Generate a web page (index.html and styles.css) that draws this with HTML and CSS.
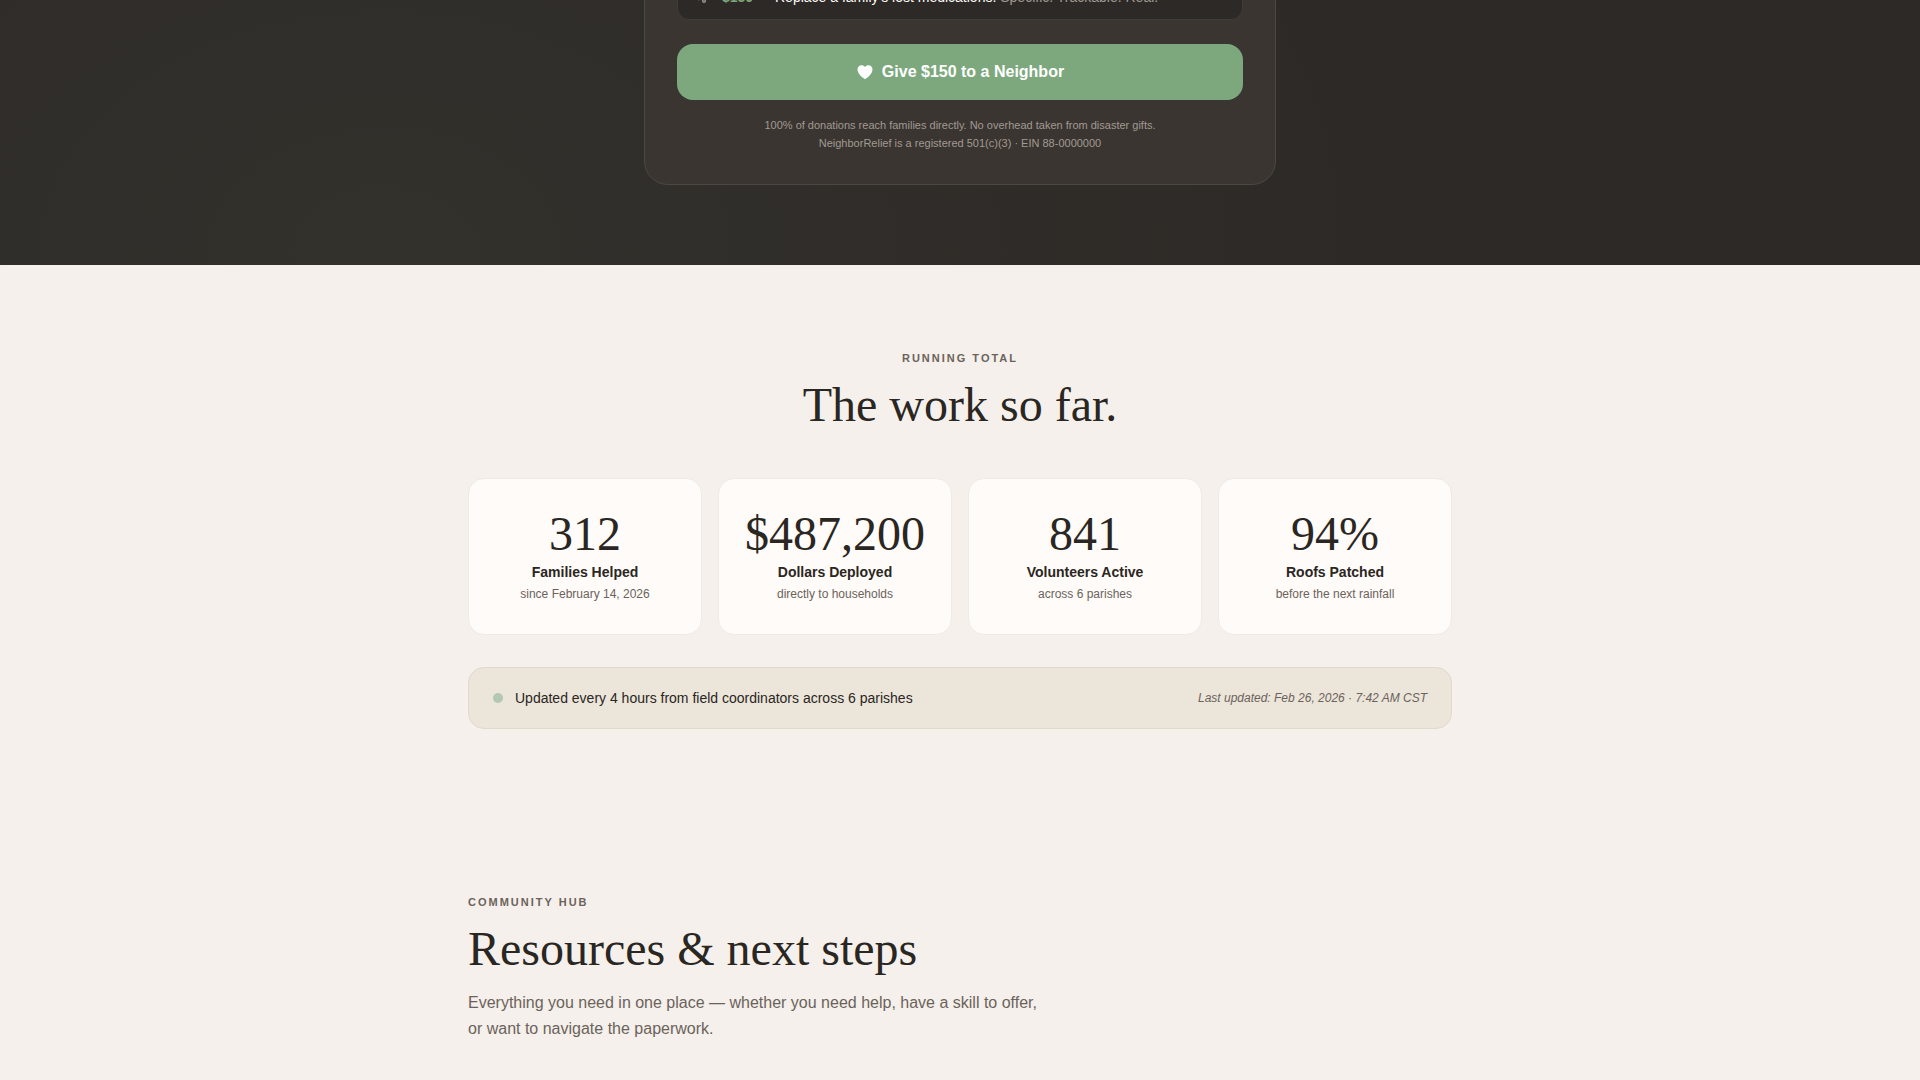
FILE: index.html
```html
<!DOCTYPE html>
<html lang="en">
<head>
<meta charset="utf-8">
<meta name="viewport" content="width=device-width, initial-scale=1">
<title>NeighborRelief</title>
<link rel="stylesheet" href="styles.css">
</head>
<body>
<section class="donate">
  <div class="donate-card">
    <div class="impact">
      <svg class="impact-icon" viewBox="0 0 24 24" aria-hidden="true"><path d="M4 3v6a5 5 0 0 0 10 0V3M7 13v4"/><circle cx="15" cy="18" r="2"/></svg>
      <strong class="impact-amount">$150</strong>
      <p class="impact-text">Replace a family's lost medications. <span class="impact-note">Specific. Trackable. Real.</span></p>
    </div>
    <button class="give" type="button">
      <svg class="give-icon" viewBox="0 0 24 24" aria-hidden="true"><path d="M12 21.500C10.500 21 2 15.500 2 8.800 2 5.400 4.300 3 7.300 3 9.200 3 10.900 3.900 12 5.400 13.100 3.900 14.800 3 16.700 3 19.700 3 22 5.400 22 8.800 22 15.500 13.500 21 12 21.500Z"/></svg>
      Give $150 to a Neighbor
    </button>
    <p class="fine-print">100% of donations reach families directly. No overhead taken from disaster gifts.<br>NeighborRelief is a registered 501(c)(3) · EIN 88-0000000</p>
  </div>
</section>
<main>
  <section class="section">
    <header class="section-head centered">
      <p class="eyebrow">Running total</p>
      <h2 class="title">The work so far.</h2>
    </header>
    <div class="stats">
      <article class="stat"><p class="stat-value">312</p><h3 class="stat-label">Families Helped</h3><p class="stat-note">since February 14, 2026</p></article>
      <article class="stat"><p class="stat-value">$487,200</p><h3 class="stat-label">Dollars Deployed</h3><p class="stat-note">directly to households</p></article>
      <article class="stat"><p class="stat-value">841</p><h3 class="stat-label">Volunteers Active</h3><p class="stat-note">across 6 parishes</p></article>
      <article class="stat"><p class="stat-value">94%</p><h3 class="stat-label">Roofs Patched</h3><p class="stat-note">before the next rainfall</p></article>
    </div>
    <div class="status">
      <span class="status-dot"></span>
      <p class="status-text">Updated every 4 hours from field coordinators across 6 parishes</p>
      <p class="status-time">Last updated: Feb 26, 2026 · 7:42 AM CST</p>
    </div>
  </section>
  <section class="section">
    <header class="section-head">
      <p class="eyebrow">Community hub</p>
      <h2 class="title">Resources &amp; next steps</h2>
      <p class="lead">Everything you need in one place — whether you need help, have a skill to offer, or want to navigate the paperwork.</p>
    </header>
  </section>
</main>
</body>
</html>
```
FILE: styles.css
```css
* { box-sizing: border-box; margin: 0; padding: 0; }

body {
  background: #f5f0eb;
  color: #2a2622;
  font-family: "Liberation Sans", Arial, sans-serif;
  overflow: hidden;
}

.donate {
  background: radial-gradient(ellipse 56% 750px at 20% 95%, #32312c, #2d2926) #2d2926;
  overflow: hidden;
  padding: 0 24px 80px;
}

/* The card starts above the fold of the section. */
.donate-card {
  max-width: 632px;
  margin: -60px auto 0;
  padding: 32px;
  background: #3b3531;
  border: 1px solid #4b4741;
  border-radius: 24px;
}

.impact {
  display: flex;
  align-items: center;
  gap: 12px;
  padding: 12px 16px 11px;
  margin-bottom: 24px;
  background: #2d2926;
  border: 1px solid #3f3b36;
  border-radius: 12px;
  font-size: 14px;
  line-height: 22px;
}

.impact-icon { width: 16px; height: 16px; fill: none; stroke: #a09a92; stroke-width: 2; }
.impact-amount { min-width: 41px; color: #7da87d; }
.impact-text { color: #fefbf8; }
.impact-note { color: #a09a92; }

.give {
  display: flex;
  align-items: center;
  justify-content: center;
  gap: 8px;
  width: 100%;
  padding: 16px;
  background: #7da87d;
  border: 0;
  border-radius: 16px;
  color: #fff;
  font: bold 16px/24px "Liberation Sans", Arial, sans-serif;
  cursor: pointer;
}

.give-icon { width: 18px; height: 18px; fill: currentColor; }

.fine-print {
  margin-top: 16px;
  color: #a09a92;
  font-size: 11px;
  line-height: 18px;
  text-align: center;
}

.section { max-width: 1032px; margin: 0 auto; padding: 80px 24px; }
.centered { text-align: center; }

.eyebrow {
  margin-bottom: 8px;
  color: #6b635b;
  font-size: 11px;
  font-weight: bold;
  line-height: 26px;
  letter-spacing: 2px;
  text-transform: uppercase;
}

.title {
  font-family: "Liberation Serif", "Times New Roman", serif;
  font-size: 48px;
  font-weight: normal;
  line-height: 51px;
}

.lead { max-width: 576px; margin-top: 16px; color: #6b635b; font-size: 16px; line-height: 26px; }

.stats {
  display: grid;
  grid-template-columns: repeat(4, 1fr);
  gap: 16px;
  margin: 48px 0 32px;
}

.stat {
  padding: 28px 16px;
  background: #fefbf8;
  border: 1px solid #efeae4;
  border-radius: 16px;
  text-align: center;
}

.stat-value { font: 48px/54px "Liberation Serif", "Times New Roman", serif; }
.stat-label { font-size: 14px; line-height: 22px; }
.stat-note { color: #6b635b; font-size: 12px; line-height: 23px; }

.status {
  display: flex;
  align-items: center;
  gap: 12px;
  padding: 20px 24px;
  background: #ece5da;
  border: 1px solid #e0d9d0;
  border-radius: 16px;
}

.status-dot { width: 10px; height: 10px; border-radius: 50%; background: #b4c7b0; }
.status-text { flex: 1; font-size: 14px; line-height: 20px; }
.status-time { color: #6b635b; font-size: 12px; font-style: italic; line-height: 20px; }
```
